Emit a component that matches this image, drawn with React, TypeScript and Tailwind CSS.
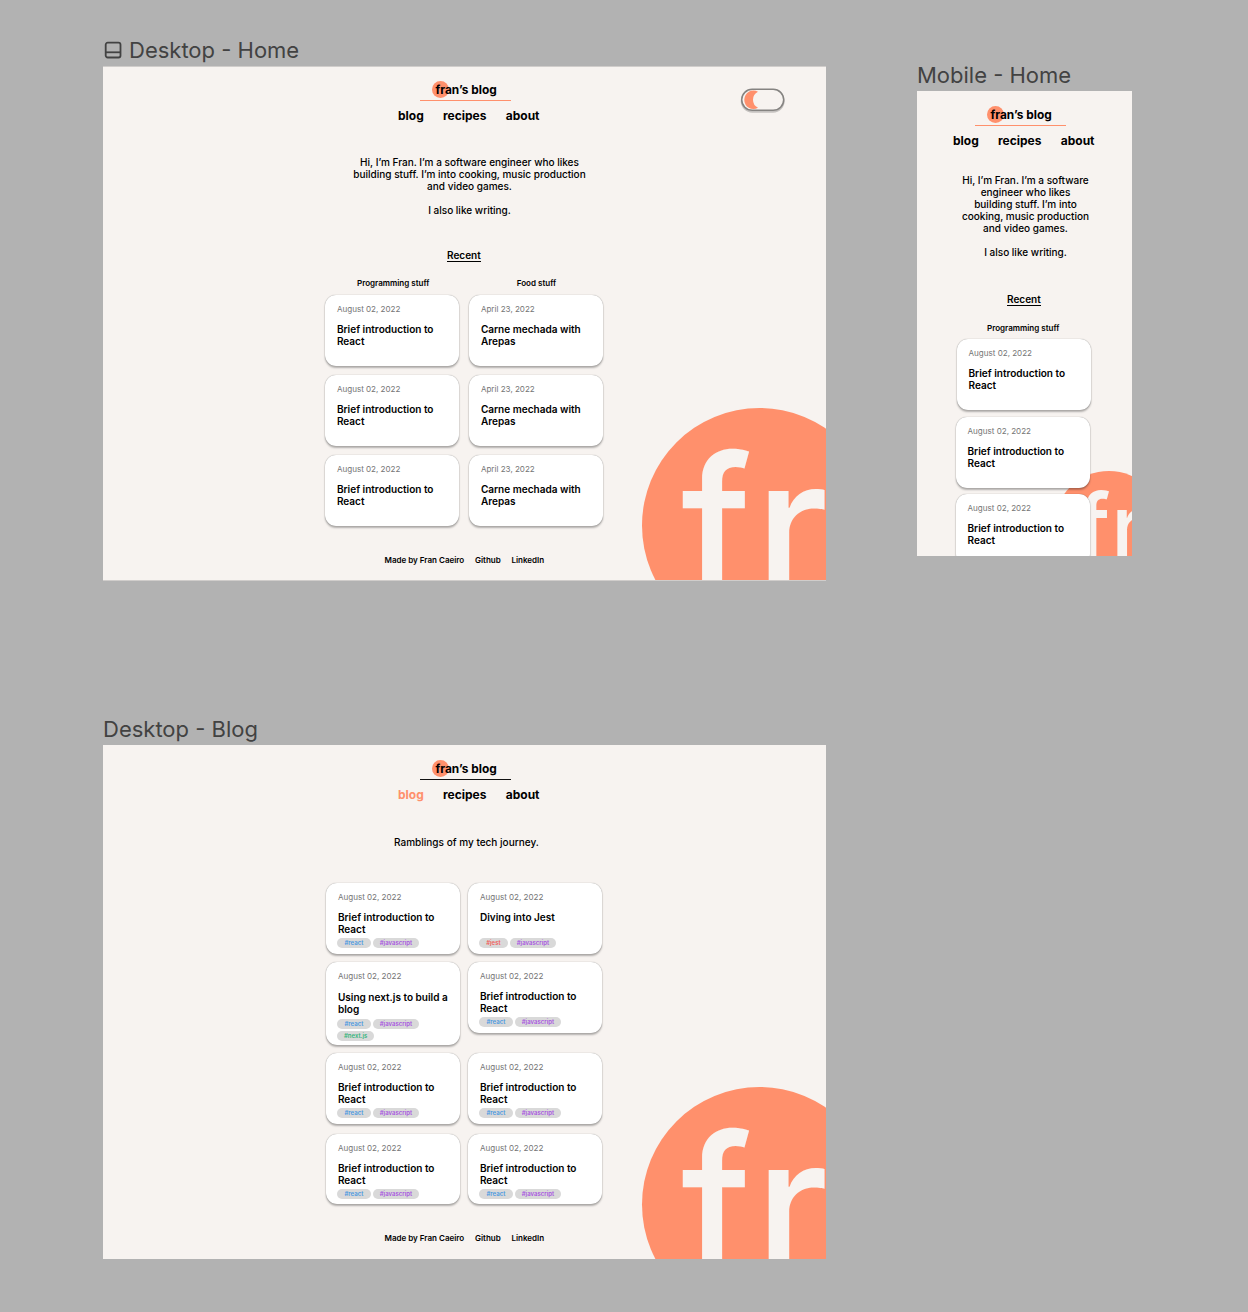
import React from "react";
import clsx from "clsx";

type TagName = "react" | "javascript" | "jest" | "next.js";

const tagStyles: Record<TagName, string> = {
  react: "w-[34px] text-[#4a98e0]",
  javascript: "w-[46px] text-[#a855e0]",
  jest: "w-[29px] text-[#f0605c]",
  "next.js": "w-[37.5px] text-[#35b57c]",
};

function FrameLabel({ children, className }: { children: React.ReactNode; className?: string }) {
  return (
    <h2 className={clsx("flex items-center whitespace-nowrap text-[22px] leading-[28px] text-[#424242]", className)}>
      {children}
    </h2>
  );
}

function Header({ active, darkRule }: { active?: string; darkRule?: boolean }) {
  return (
    <header className="flex w-[141.5px] flex-col">
      <div className="relative ml-[37.5px] w-fit">
        <span className="absolute -left-[3.5px] -top-[1px] size-[17px] rounded-full bg-[#ff906c]" />
        <span className="relative block whitespace-nowrap text-[11.9px] font-bold leading-[16px]">fran’s blog</span>
      </div>
      <div className={clsx("ml-[21.5px] mt-[2px] h-px w-[91px]", darkRule ? "bg-[#111]" : "bg-[#ff906c]")} />
      <nav className="mt-[8px] flex justify-between text-[12px] font-bold leading-[14px]">
        {["blog", "recipes", "about"].map((item) => (
          <a key={item} className={item === active ? "text-[#ff906c]" : ""}>
            {item}
          </a>
        ))}
      </nav>
    </header>
  );
}

function Card({
  date = "August 02, 2022",
  title,
  tags = [],
  className,
}: {
  date?: string;
  title: string;
  tags?: TagName[];
  className?: string;
}) {
  const tall = tags.length > 2;
  return (
    <article
      className={clsx(
        "flex w-[134px] shrink-0 flex-col rounded-[11px] bg-white pl-[11.5px] pt-[9px] shadow-[0_2px_2px_rgba(0,0,0,0.28),0_0_1px_rgba(0,0,0,0.45)]",
        tall ? "h-[83px]" : "h-[70.5px]",
        className,
      )}
    >
      <time className="text-[8.05px] leading-[11px] text-[#757575]">{date}</time>
      <h3
        className={clsx(
          "w-[116px] text-[10.04px] font-semibold leading-[12px]",
          tall ? "mt-[9px] h-[28px]" : "mt-[8px]",
          !tall && tags.length > 0 && "h-[27px]",
        )}
      >
        {title}
      </h3>
      {tags.length > 0 && (
        <div className="-ml-[1px] flex w-[90px] flex-wrap gap-x-[2px] gap-y-[2px]">
          {tags.map((tag) => (
            <span
              key={tag}
              className={clsx(
                "h-[10px] rounded-full bg-[#d9d9d9] text-center text-[6px] font-semibold leading-[10px]",
                tagStyles[tag],
              )}
            >
              #{tag}
            </span>
          ))}
        </div>
      )}
    </article>
  );
}

function Footer() {
  return (
    <footer className="flex gap-[10.7px] whitespace-nowrap text-[8.03px] font-semibold leading-[10px]">
      <span>Made by Fran Caeiro</span>
      <span>Github</span>
      <span>LinkedIn</span>
    </footer>
  );
}

function Monogram({ className }: { className?: string }) {
  return (
    <span className={clsx("absolute flex whitespace-nowrap font-medium text-[#f7f3f0]", className)}>
      <span className="origin-left scale-x-[0.95]">f</span>
      <span className="origin-left scale-x-[0.97]">r</span>
    </span>
  );
}

function BigLogo({ className }: { className?: string }) {
  return (
    <div className={clsx("absolute left-[538.5px] size-[235px] rounded-full bg-[#ff906c]", className)}>
      <Monogram className="left-[39px] top-[1px] text-[196px] leading-[235px]" />
    </div>
  );
}

function MoonToggle() {
  return (
    <svg className="absolute left-[636px] top-[19px]" width="48" height="30" viewBox="0 -0.5 48 30">
      <rect x="2.7" y="4" width="42" height="21.2" rx="10.6" fill="none" stroke="#000" strokeOpacity="0.2" strokeWidth="2" />
      <rect x="2.7" y="2.8" width="42" height="21" rx="10.5" fill="#f7f3f0" stroke="#858381" strokeWidth="1.5" />
      <path d="M19 5.3A9.2 9.2 0 1 0 19 21.3A8.9 8.9 0 0 1 19 5.3Z" fill="#ff906c" />
    </svg>
  );
}

const blogColumns: { title: string; tags: TagName[] }[][] = [
  [
    { title: "Brief introduction to React", tags: ["react", "javascript"] },
    { title: "Using next.js to build a blog", tags: ["react", "javascript", "next.js"] },
    { title: "Brief introduction to React", tags: ["react", "javascript"] },
    { title: "Brief introduction to React", tags: ["react", "javascript"] },
  ],
  [
    { title: "Diving into Jest", tags: ["jest", "javascript"] },
    { title: "Brief introduction to React", tags: ["react", "javascript"] },
    { title: "Brief introduction to React", tags: ["react", "javascript"] },
    { title: "Brief introduction to React", tags: ["react", "javascript"] },
  ],
];

function DesktopHome() {
  return (
    <section className="relative h-[515px] w-[723px] overflow-hidden border-y border-[#d0cdcb] bg-[#f7f3f0]">
      <BigLogo className="top-[341px]" />
      <MoonToggle />
      <div className="relative flex flex-col pt-[15px]">
        <div className="ml-[295px]">
          <Header />
        </div>
        <p className="ml-[246.5px] mt-[33px] w-[240px] text-center text-[10.02px] font-medium leading-[12px]">
          Hi, I’m Fran. I’m a software engineer who likes building stuff. I’m into cooking, music production and video
          games.
          <br />
          <br />I also like writing.
        </p>
        <h4 className="ml-[344px] mt-[33px] w-fit border-b border-black text-[10.04px] font-semibold leading-[12px]">
          Recent
        </h4>
        <div className="ml-[222.4px] mt-[16px] flex gap-[10px]">
          <div className="flex flex-col gap-[9.5px]">
            <h5 className="-mb-[2.5px] pl-[1.5px] text-center text-[8.03px] font-semibold leading-[10px]">Programming stuff</h5>
            {[0, 1, 2].map((i) => (
              <Card key={i} title="Brief introduction to React" />
            ))}
          </div>
          <div className="flex flex-col gap-[9.5px]">
            <h5 className="-mb-[2.5px] text-center text-[8.03px] font-semibold leading-[10px]">Food stuff</h5>
            {[0, 1, 2].map((i) => (
              <Card key={i} date="April 23, 2022" title="Carne mechada with Arepas" />
            ))}
          </div>
        </div>
        <div className="ml-[281.5px] mt-[29px]">
          <Footer />
        </div>
      </div>
    </section>
  );
}

function DesktopBlog() {
  return (
    <section className="relative h-[514px] w-[723px] overflow-hidden bg-[#f7f3f0]">
      <BigLogo className="top-[342px]" />
      <div className="relative flex flex-col pt-[16px]">
        <div className="ml-[295px]">
          <Header active="blog" darkRule />
        </div>
        <p className="ml-[291px] mt-[34px] whitespace-nowrap text-[10.04px] font-medium leading-[12px]">
          Ramblings of my tech journey.
        </p>
        <div className="ml-[223.4px] mt-[35px] flex gap-[8px]">
          {blogColumns.map((column, c) => (
            <div key={c} className="flex flex-col">
              {column.map((post, r) => (
                <Card
                  key={r}
                  title={post.title}
                  tags={post.tags}
                  className={clsx(r === 1 && "mt-[8.5px]", r === 2 && (c === 0 ? "mt-[8px]" : "mt-[20.5px]"), r === 3 && "mt-[10px]")}
                />
              ))}
            </div>
          ))}
        </div>
        <div className="ml-[281.5px] mt-[29px]">
          <Footer />
        </div>
      </div>
    </section>
  );
}

function MobileHome() {
  return (
    <section className="relative h-[465px] w-[215px] overflow-hidden bg-[#f7f3f0]">
      <div className="absolute left-[136.5px] top-[380px] size-[110px] rounded-full bg-[#ff906c]">
        <Monogram className="left-[23px] top-[1px] text-[92px] leading-[110px]" />
      </div>
      <div className="relative flex flex-col pt-[16px]">
        <div className="ml-[36px]">
          <Header />
        </div>
        <p className="ml-[42.5px] mt-[26px] w-[132px] text-center text-[10.02px] font-medium leading-[12px]">
          Hi, I’m Fran. I’m a software engineer who likes
          <br />
          building stuff. I’m into cooking, music production and video games.
          <br />
          <br />I also like writing.
        </p>
        <h4 className="ml-[90px] mt-[35px] w-fit border-b border-black text-[10.04px] font-semibold leading-[12px]">
          Recent
        </h4>
        <h5 className="ml-[70px] mt-[17px] text-[8.03px] font-semibold leading-[10px]">Programming stuff</h5>
        <Card className="ml-[40px] mt-[6px]" title="Brief introduction to React" />
        <Card className="ml-[39px] mt-[7.5px]" title="Brief introduction to React" />
        <Card className="ml-[39px] mt-[6.5px]" title="Brief introduction to React" />
      </div>
    </section>
  );
}

export default function App() {
  return (
    <main className="flex h-[1312px] w-[1248px] items-start overflow-hidden bg-[#b2b2b2] pl-[103px] font-['Inter',sans-serif] text-black">
      <div className="flex flex-col pt-[36px]">
        <FrameLabel>
          <svg className="mr-[7px] ml-[1px]" width="18" height="18" viewBox="0 0 18 18" fill="none" stroke="#424242" strokeWidth="1.8">
            <rect x="1.7" y="1.7" width="14.8" height="14.8" rx="2" />
            <path d="M1.7 11.3H16.5" />
          </svg>
          Desktop - Home
        </FrameLabel>
        <div className="mt-[2px]">
          <DesktopHome />
        </div>
        <FrameLabel className="mt-[134px]">Desktop - Blog</FrameLabel>
        <div className="mt-[2px]">
          <DesktopBlog />
        </div>
      </div>
      <div className="ml-[91px] flex flex-col pt-[61px]">
        <FrameLabel>Mobile - Home</FrameLabel>
        <div className="mt-[2px]">
          <MobileHome />
        </div>
      </div>
    </main>
  );
}
